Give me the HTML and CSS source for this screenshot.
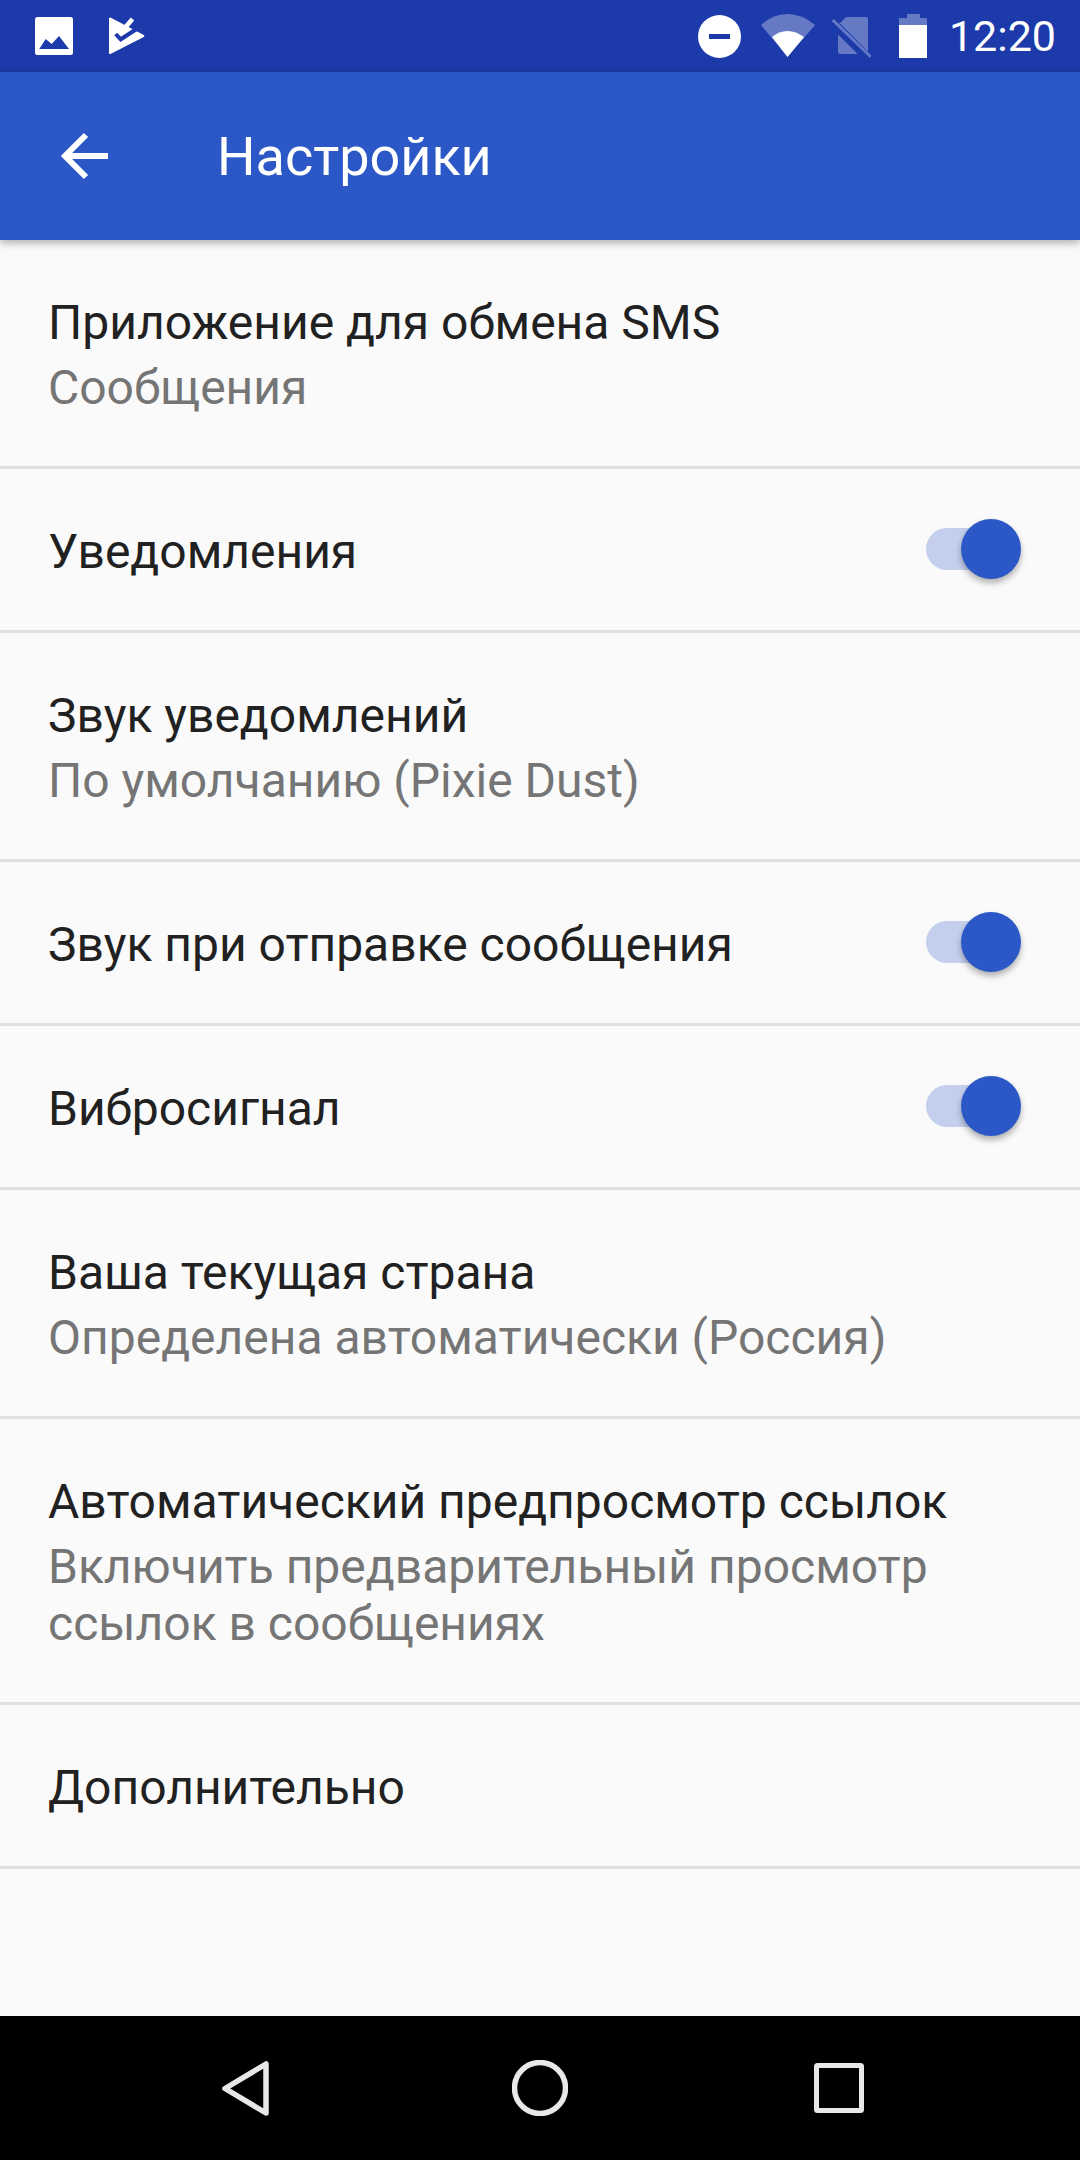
FILE: index.html
```html
<!DOCTYPE html>
<html lang="ru">
<head>
<meta charset="utf-8">
<title>Настройки</title>
<link rel="stylesheet" href="styles.css">
</head>
<body>
<div class="screen">
  <div class="statusbar">
    <div class="status-left">
      <svg class="icon-pic" viewBox="0 0 38 38"><rect width="38" height="38" rx="2.500" fill="#fff"/><path fill="#1c3aa9" d="M4.300 32l6.400-10 6 5 7.300-8 10 13z"/></svg>
      <svg class="icon-play" viewBox="0 0 36 38"><path fill="#fff" stroke="#fff" stroke-width="2" stroke-linejoin="round" d="M1 1.500L34.300 19 1 36z"/><path fill="none" stroke="#1c3aa9" stroke-width="4" d="M6.700 17l5 5.300L30 10.500"/><path fill="none" stroke="#fff" stroke-width="4.500" d="M11.700 15.700L23.500 2"/></svg>
    </div>
    <div class="status-right">
      <svg class="icon-dnd" viewBox="0 0 43 43"><circle cx="21.500" cy="21.500" r="21.500" fill="#fff"/><rect x="11" y="19" width="21" height="5" fill="#1c3aa9"/></svg>
      <svg class="icon-wifi" viewBox="0 0 54 44"><path fill="#fff" fill-opacity=".32" d="M0 11Q12 0 26.500 0T54 11L26.500 43z"/><path fill="#fff" d="M11 23Q18 17 26.500 17T43 23L26.500 43z"/></svg>
      <svg class="icon-sim" viewBox="0 0 40 44"><path fill="#fff" fill-opacity=".32" d="M15 3h20a2 2 0 0 1 2 2v33a2 2 0 0 1-2 2H9a2 2 0 0 1-2-2V11z"/><path fill="none" stroke="#1c3aa9" stroke-width="9" d="M6 13l30 30"/><path fill="none" stroke="#6379c5" stroke-width="3" d="M1.700 6L39.700 42.700"/></svg>
      <svg class="icon-bat" viewBox="0 0 28 44"><path fill="#fff" fill-opacity=".32" d="M8 0h13v4h7v8H0V4h8z"/><path fill="#fff" d="M0 11h28v33H0z"/></svg>
      <span class="clock">12:20</span>
    </div>
  </div>
  <header class="appbar">
    <svg class="icon-back" viewBox="0 0 48 48"><path fill="none" stroke="#fff" stroke-width="6" d="M48 24H5M26 3L5 24l21 21"/></svg>
    <h1 class="title">Настройки</h1>
  </header>
  <main class="list">
    <div class="row row-two">
      <div class="primary">Приложение для обмена SMS</div>
      <div class="secondary">Сообщения</div>
    </div>
    <div class="row row-one">
      <div class="primary">Уведомления</div>
      <div class="switch"><span class="track"></span><span class="thumb"></span></div>
    </div>
    <div class="row row-two">
      <div class="primary">Звук уведомлений</div>
      <div class="secondary">По умолчанию (Pixie Dust)</div>
    </div>
    <div class="row row-one">
      <div class="primary">Звук при отправке сообщения</div>
      <div class="switch"><span class="track"></span><span class="thumb"></span></div>
    </div>
    <div class="row row-one">
      <div class="primary">Вибросигнал</div>
      <div class="switch"><span class="track"></span><span class="thumb"></span></div>
    </div>
    <div class="row row-two">
      <div class="primary">Ваша текущая страна</div>
      <div class="secondary">Определена автоматически (Россия)</div>
    </div>
    <div class="row row-three">
      <div class="primary">Автоматический предпросмотр ссылок</div>
      <div class="secondary">Включить предварительный просмотр<br>ссылок в сообщениях</div>
    </div>
    <div class="row row-one">
      <div class="primary">Дополнительно</div>
    </div>
  </main>
  <nav class="navbar">
    <svg class="nav-back" viewBox="0 0 47 55"><path fill="none" stroke="#e8e8e8" stroke-width="5.500" stroke-linejoin="round" d="M3 27.500L44 3v49z"/></svg>
    <svg class="nav-home" viewBox="0 0 56 56"><circle cx="28" cy="28" r="25.500" fill="none" stroke="#e8e8e8" stroke-width="5.500"/></svg>
    <svg class="nav-recent" viewBox="0 0 50 50"><rect x="2.500" y="2.500" width="45" height="45" rx="1" fill="none" stroke="#e8e8e8" stroke-width="5"/></svg>
  </nav>
</div>
</body>
</html>
```
FILE: styles.css
```css
* { box-sizing: border-box; }
html, body { margin: 0; padding: 0; }
body { font-family: Roboto, "Noto Sans", sans-serif; background: #fafafa; }
.screen { width: 1080px; height: 2160px; display: flex; flex-direction: column; background: #fafafa; overflow: hidden; }

.statusbar { height: 72px; flex: none; background: #1c3aa9; display: flex; justify-content: space-between; align-items: center; padding: 0 24px 0 35px; }
.status-left { display: flex; align-items: center; gap: 36px; }
.icon-pic { width: 38px; height: 38px; display: block; }
.icon-play { width: 36px; height: 38px; display: block; }
.status-right { display: flex; align-items: center; }
.icon-dnd { width: 43px; height: 43px; display: block; }
.icon-wifi { width: 54px; height: 44px; margin-left: 20px; display: block; }
.icon-sim { width: 40px; height: 44px; margin-left: 16px; display: block; }
.icon-bat { width: 28px; height: 44px; margin-left: 28px; display: block; }
.clock { color: #fff; font-size: 43px; margin-left: 22px; line-height: 44px; }

.appbar { height: 168px; flex: none; background: #2b58c6; display: flex; align-items: center; padding: 0 0 0 60px; box-shadow: 0 3px 8px rgba(0,0,0,.3); position: relative; z-index: 1; }
.icon-back { width: 48px; height: 48px; display: block; }
.title { margin: 2px 0 0 109px; color: #fff; font-size: 54px; font-weight: 400; line-height: 60px; }

.list { flex: 1; }
.row { border-bottom: 3px solid #e0e0e0; padding: 0 48px; display: flex; flex-direction: column; justify-content: center; position: relative; }
.row-one { height: 164px; padding-top: 4px; }
.row-two { height: 229px; }
.row-three { height: 286px; }
.primary { font-size: 48px; line-height: 64px; color: #212121; }
.secondary { font-size: 48px; line-height: 57px; color: #757575; margin-top: 4px; }

.switch { position: absolute; right: 59px; top: 50px; width: 95px; height: 60px; }
.track { position: absolute; left: 0; top: 9px; width: 84px; height: 42px; border-radius: 21px; background: #c3cfed; }
.thumb { position: absolute; right: 0; top: 0; width: 60px; height: 60px; border-radius: 50%; background: #2b58c6; box-shadow: 0 4px 6px rgba(0,0,0,.3); }

.navbar { height: 144px; flex: none; background: #000; display: flex; align-items: center; padding: 0 0 0 222px; }
.nav-back { width: 47px; height: 55px; display: block; }
.nav-home { width: 56px; height: 56px; margin-left: 243px; display: block; }
.nav-recent { width: 50px; height: 50px; margin-left: 246px; display: block; }
```
